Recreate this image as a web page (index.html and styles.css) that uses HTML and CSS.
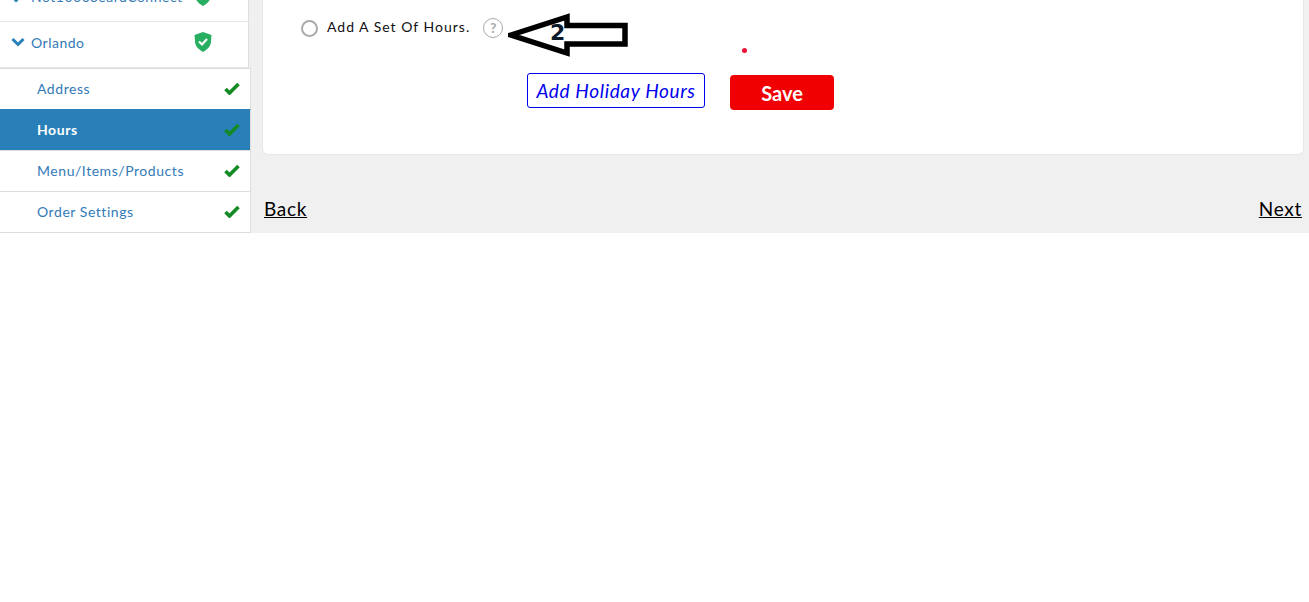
FILE: index.html
```html
<!DOCTYPE html>
<html lang="en">
<head>
    <meta charset="UTF-8">
    <title>Hours</title>
    <link rel="stylesheet" href="styles.css">
</head>
<body>
    <div class="page">
        <aside class="sidebar">
            <div class="location">
                <svg class="chevron chevron-right" viewBox="0 0 14 10"><path d="M1.5 2 7 7.5 12.5 2" fill="none" stroke="#2980b9" stroke-width="3"/></svg>
                <span class="location-name">Not1000SeardConnect</span>
                <svg class="shield" viewBox="0 0 18 20"><path d="M9 0 17.5 3 16.8 11C16.2 15 12.5 18 9 20 5.5 18 1.8 15 1.2 11L.5 3Z" fill="#27ae60"/><path d="M5 9.5 8 12.5 13 7" fill="none" stroke="#fff" stroke-width="2.2"/></svg>
            </div>
            <div class="location">
                <svg class="chevron" viewBox="0 0 14 10"><path d="M1.5 2 7 7.5 12.5 2" fill="none" stroke="#2980b9" stroke-width="3"/></svg>
                <span class="location-name">Orlando</span>
                <svg class="shield" viewBox="0 0 18 20"><path d="M9 0 17.5 3 16.8 11C16.2 15 12.5 18 9 20 5.5 18 1.8 15 1.2 11L.5 3Z" fill="#27ae60"/><path d="M5 9.5 8 12.5 13 7" fill="none" stroke="#fff" stroke-width="2.2"/></svg>
            </div>
            <a class="step">Address<svg class="tick" viewBox="0 0 16 13"><path d="M1.5 7 5.5 11 14.5 2" fill="none" stroke="#138a24" stroke-width="3.6"/></svg></a>
            <a class="step active">Hours<svg class="tick" viewBox="0 0 16 13"><path d="M1.5 7 5.5 11 14.5 2" fill="none" stroke="#138a24" stroke-width="3.6"/></svg></a>
            <a class="step">Menu/Items/Products<svg class="tick" viewBox="0 0 16 13"><path d="M1.5 7 5.5 11 14.5 2" fill="none" stroke="#138a24" stroke-width="3.6"/></svg></a>
            <a class="step">Order Settings<svg class="tick" viewBox="0 0 16 13"><path d="M1.5 7 5.5 11 14.5 2" fill="none" stroke="#138a24" stroke-width="3.6"/></svg></a>
        </aside>
        <main class="content">
            <section class="card">
                <div class="radio-row">
                    <span class="radio"></span>
                    <label class="radio-label">Add A Set Of Hours.</label>
                    <span class="help">?</span>
                </div>
                <div class="actions">
                    <a class="holiday">Add Holiday Hours</a>
                    <button class="save">Save</button>
                </div>
                <svg class="arrow" viewBox="0 0 122 46"><path d="M3 22 59 4V12.5H117V31H59V40Z" fill="#fff" stroke="#000" stroke-width="5.5"/></svg>
                <span class="arrow-num">2</span>
                <span class="dot"></span>
            </section>
            <nav class="pager">
                <a>Back</a>
                <a>Next</a>
            </nav>
        </main>
    </div>
</body>
</html>
```

FILE: styles.css
```css
body{
    margin: 0;
    background: #fff;
    font-family: "Lato", "Open Sans", sans-serif;
}
.page{
    display: flex;
    height: 233px;
    overflow: hidden;
    background: #f0f0f0;
}
.sidebar{
    width: 251px;
    flex-shrink: 0;
    display: flex;
    flex-direction: column;
    justify-content: flex-end;
}
.location{
    width: 249px;
    height: 46px;
    flex-shrink: 0;
    box-sizing: border-box;
    display: flex;
    align-items: center;
    padding: 0 0 5px 11px;
    background: #fff;
    border-right: 1px solid #ddd;
    border-bottom: 1px solid #e6e6e6;
    color: #337ab7;
    font-size: 14px;
    letter-spacing: .5px;
}
.location-name{
    margin-left: 6px;
    width: 163px;
    white-space: nowrap;
}
.chevron{
    width: 14px;
    height: 10px;
}
.chevron-right{
    transform: rotate(-90deg);
}
.shield{
    width: 18px;
    height: 20px;
}
.step{
    height: 41px;
    flex-shrink: 0;
    box-sizing: border-box;
    display: flex;
    align-items: center;
    justify-content: space-between;
    padding: 0 10px 2px 37px;
    background: #fff;
    border-right: 1px solid #ddd;
    border-top: 1px solid #ddd;
    color: #337ab7;
    font-size: 14px;
    letter-spacing: .55px;
}
.step.active{
    background: #2980b9;
    color: #fff;
    font-weight: bold;
    border-top-color: #2980b9;
}
.step:last-child{
    height: 42px;
    border-bottom: 1px solid #ddd;
}
.tick{
    width: 16px;
    height: 13px;
}
.content{
    flex: 1;
    display: flex;
    flex-direction: column;
    justify-content: flex-end;
    padding: 0 5px 0 11px;
}
.card{
    position: relative;
    height: 155px;
    flex-shrink: 0;
    box-sizing: border-box;
    background: #fff;
    border: 1px solid #e6e6e6;
    border-top: 0;
    border-radius: 0 0 6px 6px;
}
.radio-row{
    display: flex;
    align-items: center;
    height: 20px;
    margin-top: 18px;
    padding-left: 38px;
}
.radio{
    width: 13px;
    height: 13px;
    border: 2px solid #aaa;
    border-radius: 50%;
}
.radio-label{
    margin: 0 0 3px 9px;
    font-size: 14px;
    letter-spacing: 1px;
    color: #111;
}
.help{
    margin-left: 13px;
    width: 18px;
    height: 18px;
    border: 1px solid #aaa;
    border-radius: 50%;
    text-align: center;
    line-height: 18px;
    font-size: 14px;
    font-weight: bold;
    color: #aaa;
}
.actions{
    display: flex;
    align-items: flex-start;
    gap: 25px;
    margin-top: 35px;
    padding-left: 264px;
}
.holiday{
    box-sizing: border-box;
    width: 178px;
    height: 35px;
    line-height: 33px;
    text-align: center;
    border: 1px solid #0000ee;
    border-radius: 3px;
    color: #0000ee;
    font-style: italic;
    font-size: 19px;
    letter-spacing: .65px;
    white-space: nowrap;
}
.save{
    width: 104px;
    height: 35px;
    margin-top: 2px;
    border: 0;
    border-radius: 4px;
    background: #f00000;
    color: #fff;
    font-family: inherit;
    font-weight: bold;
    font-size: 20px;
}
.arrow{
    position: absolute;
    left: 245px;
    top: 13px;
    width: 122px;
    height: 46px;
}
.arrow-num{
    position: absolute;
    left: 287px;
    top: 20px;
    font-family: "DejaVu Sans", sans-serif;
    font-weight: bold;
    font-size: 22px;
    color: #0a1a2a;
}
.dot{
    position: absolute;
    left: 479px;
    top: 48px;
    width: 5px;
    height: 5px;
    border-radius: 50%;
    background: #ee1133;
}
.pager{
    height: 78px;
    flex-shrink: 0;
    box-sizing: border-box;
    display: flex;
    justify-content: space-between;
    padding: 42px 2px 0 2px;
    font-size: 19px;
    letter-spacing: .7px;
    color: #000;
    text-decoration: underline;
}
```
